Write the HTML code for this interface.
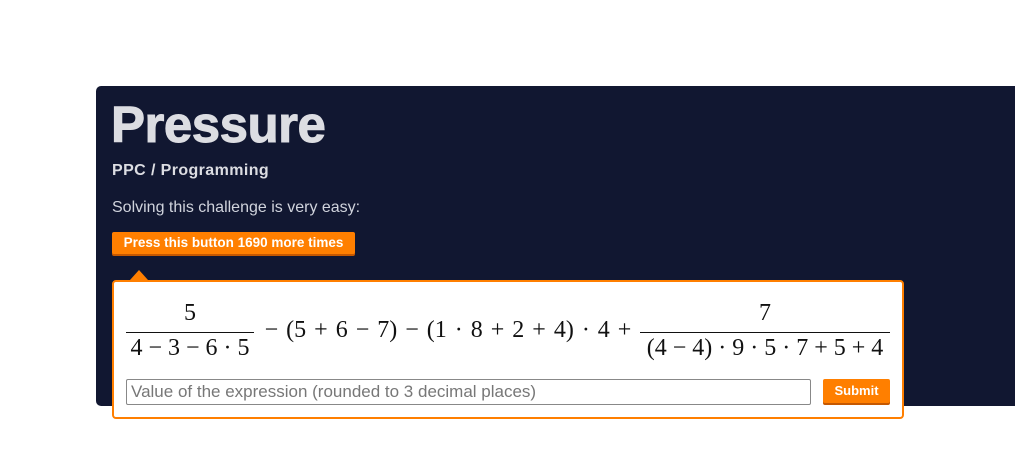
<!DOCTYPE html>
<html><head><style>
body{margin:0;width:1015px;height:452px;background:#fff;position:relative;overflow:hidden;font-family:"Liberation Sans",sans-serif}
.panel{position:absolute;left:96px;top:86px;width:930px;height:320px;background:#111731;border-radius:5px}
h1{position:absolute;left:111px;top:96px;margin:0;font-size:51px;font-weight:bold;color:#dcdde2;letter-spacing:-.5px;line-height:58px;-webkit-text-stroke:1px #dcdde2}
.sub{position:absolute;left:112px;top:162px;font-size:16px;font-weight:bold;color:#dcdde2;letter-spacing:.4px}
.desc{position:absolute;left:112px;top:199px;font-size:16px;color:#d0d3dc}
.btn{position:absolute;left:112px;top:232px;width:243px;height:22px;background:#ff7f00;border-radius:2px;box-shadow:0 2px 0 #c65800;color:#fff;font-weight:bold;font-size:13.5px;line-height:22px;text-align:center}
.arrow{position:absolute;left:130px;top:270px;width:0;height:0;border-left:9px solid transparent;border-right:9px solid transparent;border-bottom:10px solid #ff7f00}
.box{position:absolute;left:112px;top:280px;width:788px;height:135px;border:2px solid #ff7f00;border-radius:4px;background:#fff}
.math{position:absolute;font-family:"Liberation Serif",serif;font-size:24px;color:#111;white-space:nowrap}
.fr{position:absolute;text-align:center;border-top:1px solid #111}
input{position:absolute;left:126px;top:379px;width:685px;height:26px;border:1px solid #888;border-radius:2px;box-sizing:border-box;font-family:"Liberation Sans",sans-serif;font-size:17px;color:#777;padding:0 4px}
input::placeholder{color:#777}
.sb{position:absolute;left:823px;top:379px;width:67px;height:24px;background:#ff7f00;border-radius:2px;box-shadow:0 2px 0 #c65800;color:#fff;font-weight:bold;font-size:13px;line-height:24px;text-align:center}
</style></head><body>
<div class="panel"></div>
<h1>Pressure</h1>
<div class="sub">PPC / Programming</div>
<div class="desc">Solving this challenge is very easy:</div>
<div class="btn">Press this button 1690 more times</div>
<div class="arrow"></div>
<div class="box"></div>
<div class="math" style="left:126px;top:300px;width:128px;text-align:center">5</div>
<div class="fr" style="left:126px;top:332px;width:128px;height:0"></div>
<div class="math" style="left:126px;top:335px;width:128px;text-align:center">4 − 3 − 6 · 5</div>
<div class="math" style="left:255px;top:317px;width:386px;text-align:center;word-spacing:2px">− (5 + 6 − 7) − (1 · 8 + 2 + 4) · 4 +</div>
<div class="math" style="left:640px;top:300px;width:250px;text-align:center">7</div>
<div class="fr" style="left:640px;top:332px;width:250px;height:0"></div>
<div class="math" style="left:640px;top:335px;width:250px;text-align:center">(4 − 4) · 9 · 5 · 7 + 5 + 4</div>
<input placeholder="Value of the expression (rounded to 3 decimal places)">
<div class="sb">Submit</div>
</body></html>
